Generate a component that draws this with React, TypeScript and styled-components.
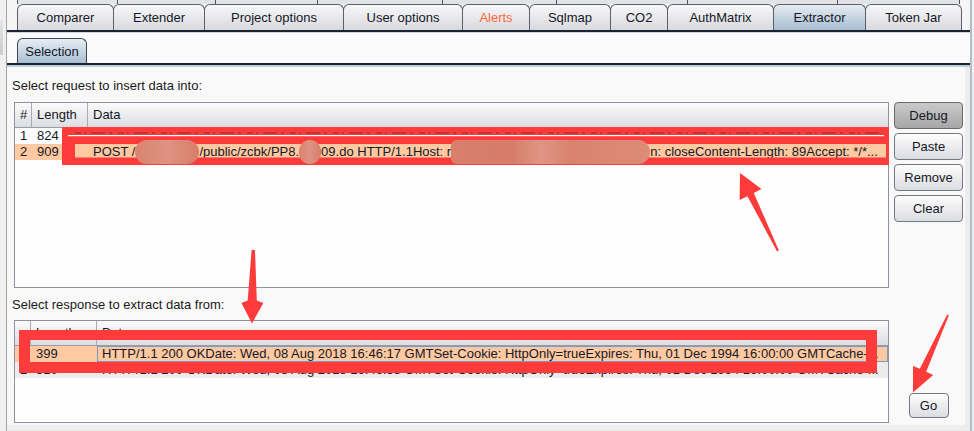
import React from "react";
import styled, { createGlobalStyle } from "styled-components";

const GlobalStyle = createGlobalStyle`
  html, body { margin: 0; padding: 0; background: #f0f0f0; }
  body {
    font-family: "Liberation Sans", Arial, sans-serif;
    font-size: 13px;
    color: #151520;
  }
`;

const upperTabs = [100, 98, 102, 125, 114, 131, 150, 123];

const tabs = [
  { label: "Comparer", width: 96 },
  { label: "Extender", width: 91 },
  { label: "Project options", width: 139 },
  { label: "User options", width: 119 },
  { label: "Alerts", width: 67, alert: true },
  { label: "Sqlmap", width: 81 },
  { label: "CO2", width: 57 },
  { label: "AuthMatrix", width: 106 },
  { label: "Extractor", width: 92, active: true },
  { label: "Token Jar", width: 96 },
];

const RED = "#fe3b3b";

function App() {
  return (
    <Page>
      <GlobalStyle />
      <LeftStrip>
        <Nub />
      </LeftStrip>
      <Frame>
        <TabStrip>
          <UpperRow>
            {upperTabs.map((w, i) => (
              <UpperTab key={i} $w={w} $last={i === upperTabs.length - 1} />
            ))}
          </UpperRow>
          <MainRow>
            {tabs.map((t) => (
              <Tab key={t.label} $w={t.width} $active={t.active} $alert={t.alert}>
                {t.label}
              </Tab>
            ))}
          </MainRow>
        </TabStrip>
        <NavyRule />
        <LightRule />
        <SubStrip>
          <SubTab>Selection</SubTab>
        </SubStrip>
        <NavyRule />
        <BlueRule />
        <Body>
          <Content>
            <Section $top={10}>
              <Label $gap={7}>Select request to insert data into:</Label>
              <Table $height={186}>
                <Header $cols="17px 56px 1fr">
                  <HeadCell>#</HeadCell>
                  <HeadCell>Length</HeadCell>
                  <HeadCell>Data</HeadCell>
                </Header>
                <Row $cols="17px 56px 1fr">
                  <Cell>1</Cell>
                  <Cell>824</Cell>
                  <Cell>POST /public/zcbk/PP8.do HTTP/1.1Host: Connection: closeContent-Length: 76Accept: */*...</Cell>
                </Row>
                <Row $cols="17px 56px 1fr" $selected>
                  <Cell>2</Cell>
                  <Cell>909</Cell>
                  <Cell $free>
                    POST /<Redact $w={64} />/public/zcbk/PP8.<Redact $w={22} />09.do HTTP/1.1Host: r
                    <Redact $w={199} $wide />n: closeContent-Length: 89Accept: */*...
                  </Cell>
                </Row>
              </Table>
              <ButtonColumn>
                <Button $pressed>Debug</Button>
                <Button>Paste</Button>
                <Button>Remove</Button>
                <Button>Clear</Button>
              </ButtonColumn>
            </Section>
            <Section $top={8}>
              <Label $gap={6}>Select response to extract data from:</Label>
              <Table $height={103}>
                <Header $cols="16px 66px 1fr">
                  <HeadCell />
                  <HeadCell>Length</HeadCell>
                  <HeadCell>Data</HeadCell>
                </Header>
                <Row $cols="16px 66px 1fr" $selected>
                  <Cell>1</Cell>
                  <Cell>399</Cell>
                  <Cell $focused>
                    HTTP/1.1 200 OKDate: Wed, 08 Aug 2018 16:46:17 GMTSet-Cookie: HttpOnly=trueExpires: Thu, 01 Dec 1994 16:00:00 GMTCache-...
                  </Cell>
                </Row>
                <Row $cols="16px 66px 1fr" $shade>
                  <Cell>2</Cell>
                  <Cell>510</Cell>
                  <Cell>
                    HTTP/1.1 200 OKDate: Wed, 08 Aug 2018 16:46:38 GMTSet-Cookie: HttpOnly=trueExpires: Thu, 01 Dec 1994 16:00:00 GMTCache-...
                  </Cell>
                </Row>
              </Table>
              <GoColumn>
                <GoButton>Go</GoButton>
              </GoColumn>
            </Section>
          </Content>
        </Body>
      </Frame>

      <Overlay viewBox="0 0 974 431">
        {/* annotation boxes */}
        <path
          fill={RED}
          fillRule="evenodd"
          d="M62 127 H889 V165 H62 Z M75 144 H886 V157.5 H75 Z"
        />
        <line x1="75" y1="133" x2="880" y2="133" stroke="#2c2020" strokeWidth="1" strokeDasharray="6 3 2 5 14 4 3 6" opacity="0.55" />
        <rect x="68" y="135" width="816" height="1.2" fill="#ffffff" />
        <path
          fill={RED}
          fillRule="evenodd"
          d="M19 330 H877 V373 H19 Z M30 340 H866 V362 H30 Z"
        />
        {/* arrows */}
        <polygon
          fill={RED}
          points="740,173 761.5,189 753.8,193 778.9,250.6 777.1,251.4 747.4,196.3 739.6,200"
        />
        <polygon
          fill={RED}
          points="252,323.5 263.3,303 256.8,300.5 255,250 251.6,250 247.7,300.5 241.5,303"
        />
        <polygon
          fill={RED}
          points="913,392.5 913,366 919.8,368.8 947.2,314.6 948.8,315.4 926.2,371.7 933.2,375"
        />
      </Overlay>
    </Page>
  );
}

export default App;

const Page = styled.div`
  position: relative;
  width: 974px;
  height: 431px;
  overflow: hidden;
  display: flex;
  background: #f0f0f0;
`;

const LeftStrip = styled.div`
  width: 6px;
  flex: none;
  display: flex;
  flex-direction: column;
`;

const Nub = styled.div`
  margin-top: 20px;
  width: 3px;
  height: 35px;
  background: linear-gradient(#e4e4e4, #cdcdcd);
`;

const Frame = styled.div`
  width: 966px;
  flex: none;
  box-sizing: border-box;
  border-left: 1px solid #a4a4a4;
  border-right: 2px solid #b3bdc9;
  background: #ededed;
  display: flex;
  flex-direction: column;
`;

const TabStrip = styled.div`
  height: 30px;
  padding-left: 10px;
  background: #f5f5f5;
  display: flex;
  flex-direction: column;
`;

const UpperRow = styled.div`
  height: 4px;
  display: flex;
`;

const UpperTab = styled.div<{ $w: number; $last?: boolean }>`
  width: ${(p) => p.$w}px;
  box-sizing: border-box;
  border-left: 1px solid #4f5361;
  border-right: ${(p) => (p.$last ? "1px solid #4f5361" : "none")};
  background: #e2e3e7;
`;

const MainRow = styled.div`
  height: 26px;
  display: flex;
`;

const Tab = styled.div<{ $w: number; $active?: boolean; $alert?: boolean }>`
  width: ${(p) => p.$w + 1}px;
  margin-right: -1px;
  box-sizing: border-box;
  border: 1px solid #5b5f6b;
  border-bottom: none;
  border-radius: 6px 6px 0 0;
  background: ${(p) =>
    p.$active
      ? "linear-gradient(#e6ecf2, #a7bdd2)"
      : "linear-gradient(#f7f7f9, #d9dade)"};
  color: ${(p) => (p.$alert ? "#ff6a3d" : "#141826")};
  display: flex;
  align-items: center;
  justify-content: center;
  white-space: nowrap;
`;

const NavyRule = styled.div`
  height: 2px;
  background: #1b2232;
`;

const LightRule = styled.div`
  height: 1px;
  background: #cbd6e2;
`;

const BlueRule = styled.div`
  height: 2px;
  background: #bfcddb;
`;

const SubStrip = styled.div`
  height: 30px;
  box-sizing: border-box;
  padding: 5px 0 0 10px;
  background: #fbfbfb;
  display: flex;
`;

const SubTab = styled.div`
  width: 70px;
  height: 25px;
  box-sizing: border-box;
  border: 1px solid #3d4452;
  border-bottom: none;
  border-radius: 6px 6px 0 0;
  background: linear-gradient(#e8eef4, #a8bed3);
  color: #141826;
  display: flex;
  align-items: center;
  justify-content: center;
`;

const Body = styled.div`
  flex: 1;
  display: flex;
  align-items: flex-start;
`;

const Content = styled.div`
  width: 958px;
  height: 358px;
  box-sizing: border-box;
  padding: 0 0 2px 7px;
  background: #f9f9f9;
  display: flex;
  flex-direction: column;
`;

const Section = styled.div<{ $top: number }>`
  margin-top: ${(p) => p.$top}px;
  display: grid;
  grid-template-columns: 875px 69px;
  column-gap: 5px;
`;

const Label = styled.div<{ $gap: number }>`
  grid-column: 1 / -1;
  height: 18px;
  line-height: 18px;
  margin-left: -2px;
  margin-bottom: ${(p) => p.$gap}px;
  color: #1a1a1a;
`;

const Table = styled.div<{ $height: number }>`
  height: ${(p) => p.$height}px;
  box-sizing: border-box;
  border: 1px solid #8e929c;
  background: #fefefe;
`;

const Header = styled.div<{ $cols: string }>`
  display: grid;
  grid-template-columns: ${(p) => p.$cols};
  height: 24px;
  border-bottom: 1px solid #9a9da6;
  background: linear-gradient(#fbfbfb, #dcdde2);
`;

const HeadCell = styled.div`
  padding-left: 5px;
  line-height: 24px;
  border-right: 1px solid #a9acb4;
  white-space: nowrap;
  overflow: hidden;
  color: #141826;
  &:last-child {
    border-right: none;
  }
`;

const Row = styled.div<{ $cols: string; $selected?: boolean; $shade?: boolean }>`
  display: grid;
  grid-template-columns: ${(p) => p.$cols};
  height: 16px;
  line-height: 16px;
  color: #141826;
  background: ${(p) => (p.$selected ? "#ffc9a1" : p.$shade ? "#ececec" : "transparent")};
`;

const Cell = styled.div<{ $free?: boolean; $focused?: boolean }>`
  padding-left: 5px;
  white-space: nowrap;
  overflow: ${(p) => (p.$free ? "visible" : "hidden")};
  box-shadow: ${(p) => (p.$focused ? "inset 0 0 0 1px #7d98c2" : "none")};
`;

const Redact = styled.span<{ $w: number; $wide?: boolean }>`
  position: relative;
  z-index: 3;
  display: inline-block;
  vertical-align: top;
  width: ${(p) => p.$w}px;
  height: 16px;
  &::after {
    content: "";
    position: absolute;
    left: 0;
    right: 0;
    top: -4px;
    bottom: -4px;
    border-radius: ${(p) => (p.$wide ? "6px 12px 12px 6px" : "12px")};
    background: ${(p) =>
      p.$wide
        ? "linear-gradient(90deg, #d8806c 0%, #d67c68 30%, #e09585 45%, #d9836f 60%, #dd8b77 100%)"
        : "linear-gradient(90deg, #d98470, #e09282 50%, #d67e6a)"};
  }
`;

const ButtonColumn = styled.div`
  display: flex;
  flex-direction: column;
  gap: 4px;
`;

const Button = styled.button<{ $pressed?: boolean }>`
  height: 27px;
  width: 100%;
  padding: 0;
  box-sizing: border-box;
  border: 1px solid ${(p) => (p.$pressed ? "#6b6b6b" : "#737782")};
  border-radius: 4px;
  background: ${(p) =>
    p.$pressed
      ? "linear-gradient(#cacaca, #a6a6a6)"
      : "linear-gradient(#fdfdfd, #dcdde1)"};
  font-family: "Liberation Sans", Arial, sans-serif;
  font-size: 13px;
  color: #141826;
`;

const GoColumn = styled.div`
  display: flex;
  align-items: flex-end;
  justify-content: center;
  padding-bottom: 5px;
`;

const GoButton = styled(Button)`
  width: 40px;
  height: 25px;
`;

const Overlay = styled.svg`
  position: absolute;
  top: 0;
  left: 0;
  width: 974px;
  height: 431px;
  pointer-events: none;
  z-index: 2;
`;
